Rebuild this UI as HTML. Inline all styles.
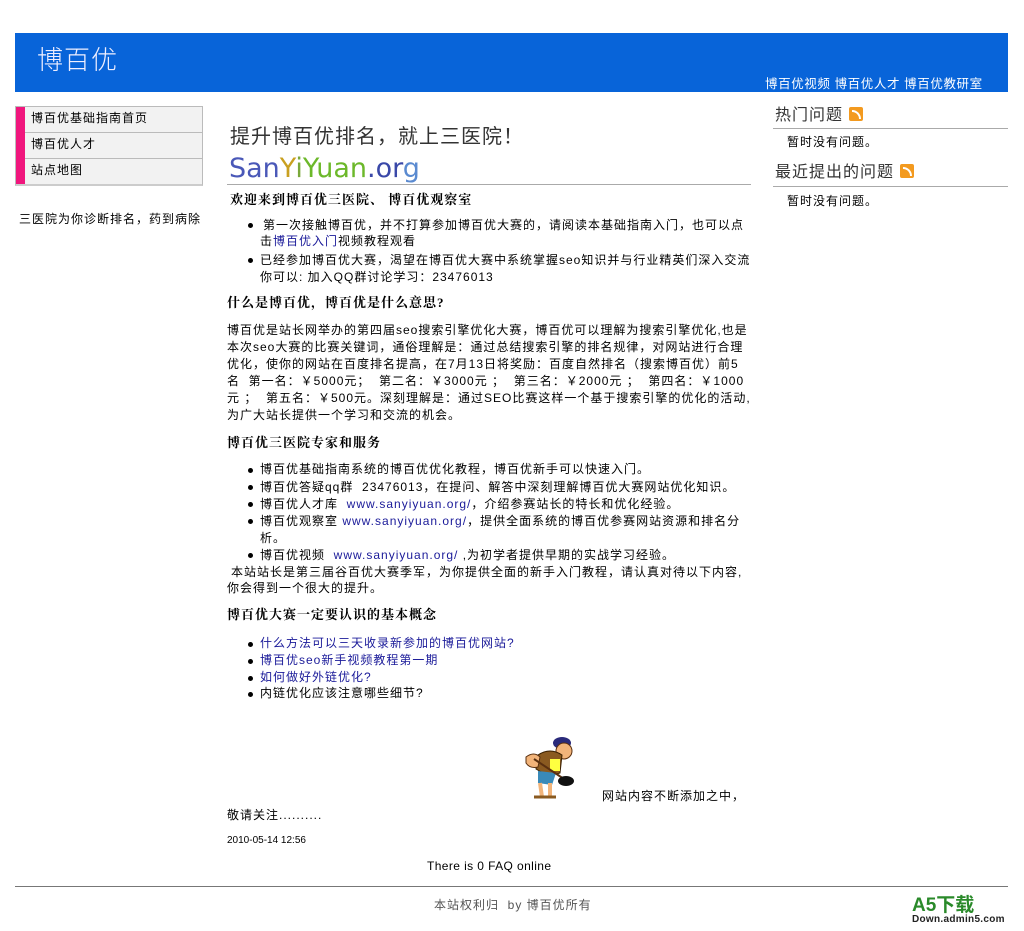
<!DOCTYPE html>
<html><head><meta charset="utf-8"><style>
body{margin:0;background:#fff;font-family:"Liberation Sans","Noto Sans CJK SC",sans-serif;font-size:12px;color:#000;width:1024px;height:930px;position:relative;overflow:hidden;letter-spacing:1px}
.a{position:absolute;white-space:nowrap;line-height:17px;height:17px}
.b{font-weight:bold;font-family:"Liberation Serif","Noto Serif CJK SC",serif;font-size:13px}
a,.l{color:#1a1a99;text-decoration:none}
.dot{position:absolute;width:5px;height:5px;border-radius:50%;background:#000}
.rss{display:inline-block;width:14px;height:14px;background:#f39a1f;border-radius:2px;vertical-align:-1px;margin-left:6px;position:relative}
.rss:after{content:"";position:absolute;left:3px;top:3px;width:7px;height:7px;border:2px solid #fff;border-left:none;border-bottom:none;border-radius:0 10px 0 0}
</style></head><body>
<div style="position:absolute;left:15px;top:33px;width:993px;height:59px;background:#0864d9"></div>
<div class="a" style="left:37px;top:45px;font-size:26px;line-height:30px;height:30px;color:#eef;font-weight:300">博百优</div>
<div class="a" style="left:765px;top:76px;color:#fff;font-size:12.5px;letter-spacing:0.6px">博百优视频 博百优人才 博百优教研室</div>

<div style="position:absolute;left:15px;top:106px;width:186px;height:77px;border:1px solid #bbb;border-bottom:2px solid #ccc;background:#f2f2f2"></div>
<div style="position:absolute;left:16px;top:107px;width:9px;height:77px;background:#f0167d"></div>
<div style="position:absolute;left:25px;top:132px;width:177px;height:1px;background:#bbb"></div>
<div style="position:absolute;left:25px;top:158px;width:177px;height:1px;background:#bbb"></div>
<div class="a" style="left:31px;top:110px">博百优基础指南首页</div>
<div class="a" style="left:31px;top:136px">博百优人才</div>
<div class="a" style="left:31px;top:162px">站点地图</div>
<div class="a" style="left:19px;top:211px">三医院为你诊断排名，药到病除</div>

<div class="a" style="left:230px;top:124px;font-size:20px;line-height:26px;height:26px;color:#333">提升博百优排名，就上三医院！</div>
<div class="a" style="left:229px;top:152px;font-size:27px;line-height:34px;height:34px;font-family:'DejaVu Sans',sans-serif;letter-spacing:0"><span style="color:#4a58b8">San</span><span style="color:#c9a020">Y</span><span style="color:#7aa83a">i</span><span style="color:#6cb82a">Y</span><span style="color:#6cb82a">uan</span><span style="color:#3a48a8">.or</span><span style="color:#5a8ad0">g</span></div>
<div style="position:absolute;left:227px;top:184px;width:524px;height:1px;background:#aaa"></div>

<div class="a b" style="left:230px;top:191px">欢迎来到博百优三医院、 博百优观察室</div>
<div class="dot" style="left:248px;top:223px"></div>
<div class="a" style="left:263px;top:217px">第一次接触博百优，并不打算参加博百优大赛的，请阅读本基础指南入门，也可以点</div>
<div class="a" style="left:260px;top:233px">击<span class="l">博百优入门</span>视频教程观看</div>
<div class="dot" style="left:248px;top:258px"></div>
<div class="a" style="left:260px;top:252px">已经参加博百优大赛，渴望在博百优大赛中系统掌握seo知识并与行业精英们深入交流</div>
<div class="a" style="left:260px;top:269px">你可以: 加入QQ群讨论学习：23476013</div>

<div class="a b" style="left:227px;top:294px">什么是博百优，博百优是什么意思?</div>
<div class="a" style="left:227px;top:322px">博百优是站长网举办的第四届seo搜索引擎优化大赛，博百优可以理解为搜索引擎优化,也是</div>
<div class="a" style="left:227px;top:339px">本次seo大赛的比赛关键词，通俗理解是：通过总结搜索引擎的排名规律，对网站进行合理</div>
<div class="a" style="left:227px;top:356px">优化，使你的网站在百度排名提高，在7月13日将奖励：百度自然排名（搜索博百优）前5</div>
<div class="a" style="left:227px;top:373px">名&nbsp; 第一名：￥5000元；&nbsp; 第二名：￥3000元 ；&nbsp; 第三名：￥2000元 ；&nbsp; 第四名：￥1000</div>
<div class="a" style="left:227px;top:390px">元 ；&nbsp; 第五名：￥500元。深刻理解是：通过SEO比赛这样一个基于搜索引擎的优化的活动,</div>
<div class="a" style="left:227px;top:407px">为广大站长提供一个学习和交流的机会。</div>

<div class="a b" style="left:227px;top:434px">博百优三医院专家和服务</div>
<div class="dot" style="left:248px;top:468px"></div>
<div class="a" style="left:260px;top:461px">博百优基础指南系统的博百优优化教程，博百优新手可以快速入门。</div>
<div class="dot" style="left:248px;top:485px"></div>
<div class="a" style="left:260px;top:479px">博百优答疑qq群&nbsp; 23476013，在提问、解答中深刻理解博百优大赛网站优化知识。</div>
<div class="dot" style="left:248px;top:502px"></div>
<div class="a" style="left:260px;top:496px">博百优人才库&nbsp; <span class="l">www.sanyiyuan.org/</span>，介绍参赛站长的特长和优化经验。</div>
<div class="dot" style="left:248px;top:519px"></div>
<div class="a" style="left:260px;top:513px">博百优观察室 <span class="l">www.sanyiyuan.org/</span>，提供全面系统的博百优参赛网站资源和排名分</div>
<div class="a" style="left:260px;top:530px">析。</div>
<div class="dot" style="left:248px;top:553px"></div>
<div class="a" style="left:260px;top:547px">博百优视频&nbsp; <span class="l">www.sanyiyuan.org/</span> ,为初学者提供早期的实战学习经验。</div>
<div class="a" style="left:231px;top:564px">本站站长是第三届谷百优大赛季军，为你提供全面的新手入门教程，请认真对待以下内容,</div>
<div class="a" style="left:227px;top:580px">你会得到一个很大的提升。</div>

<div class="a b" style="left:227px;top:606px">博百优大赛一定要认识的基本概念</div>
<div class="dot" style="left:248px;top:642px"></div>
<div class="a l" style="left:260px;top:635px">什么方法可以三天收录新参加的博百优网站?</div>
<div class="dot" style="left:248px;top:659px"></div>
<div class="a l" style="left:260px;top:652px">博百优seo新手视频教程第一期</div>
<div class="dot" style="left:248px;top:676px"></div>
<div class="a l" style="left:260px;top:669px">如何做好外链优化?</div>
<div class="dot" style="left:248px;top:692px"></div>
<div class="a" style="left:260px;top:685px">内链优化应该注意哪些细节?</div>

<svg style="position:absolute;left:520px;top:735px" width="60" height="66" viewBox="0 0 60 66">
<ellipse cx="42" cy="8" rx="9" ry="6" fill="#2a2a7a"/>
<ellipse cx="44" cy="16" rx="8" ry="8" fill="#f2b47a" stroke="#5a3010" stroke-width="1"/>
<path d="M18 20 Q30 12 42 20 L40 38 Q28 42 16 34Z" fill="#8a5a20" stroke="#3a2000"/>
<path d="M30 24 L40 24 L40 36 L30 36Z" fill="#ffff40"/>
<path d="M6 22 Q14 16 20 22 L18 32 Q10 34 6 28Z" fill="#f2b47a" stroke="#5a3010"/>
<path d="M18 36 L36 38 L32 50 L18 48Z" fill="#3a8ab8"/>
<path d="M20 48 L22 62 M30 48 L30 62" stroke="#f2b47a" stroke-width="4"/>
<path d="M14 62 L36 62" stroke="#8a5a20" stroke-width="3"/>
<path d="M14 24 L44 44" stroke="#5a3010" stroke-width="2"/>
<ellipse cx="46" cy="46" rx="8" ry="5" fill="#111"/>
</svg>
<div class="a" style="left:602px;top:788px">网站内容不断添加之中，</div>
<div class="a" style="left:227px;top:807px">敬请关注..........</div>
<div class="a" style="left:227px;top:832px;font-size:10px;letter-spacing:0">2010-05-14 12:56</div>
<div class="a" style="left:427px;top:858px;letter-spacing:0.4px">There is 0 FAQ online</div>

<div class="a" style="left:775px;top:106px;font-size:16px;line-height:20px;height:20px;color:#333">热门问题<span class="rss"></span></div>
<div style="position:absolute;left:773px;top:128px;width:235px;height:1px;background:#aaa"></div>
<div class="a" style="left:787px;top:134px">暂时没有问题。</div>
<div class="a" style="left:775px;top:163px;font-size:16px;line-height:20px;height:20px;color:#333">最近提出的问题<span class="rss"></span></div>
<div style="position:absolute;left:773px;top:186px;width:235px;height:1px;background:#aaa"></div>
<div class="a" style="left:787px;top:193px">暂时没有问题。</div>

<div style="position:absolute;left:15px;top:886px;width:993px;height:1px;background:#777"></div>
<div class="a" style="left:434px;top:897px;color:#555">本站权利归&nbsp; by 博百优所有</div>
<div class="a" style="left:912px;top:895px;font-size:19px;font-weight:bold;color:#2a8a2a;line-height:22px;height:22px;letter-spacing:0">A5下载</div>
<div class="a" style="left:912px;top:914px;font-size:10px;font-weight:bold;color:#222;line-height:12px;letter-spacing:0.3px">Down.admin5.com</div>
</body></html>
